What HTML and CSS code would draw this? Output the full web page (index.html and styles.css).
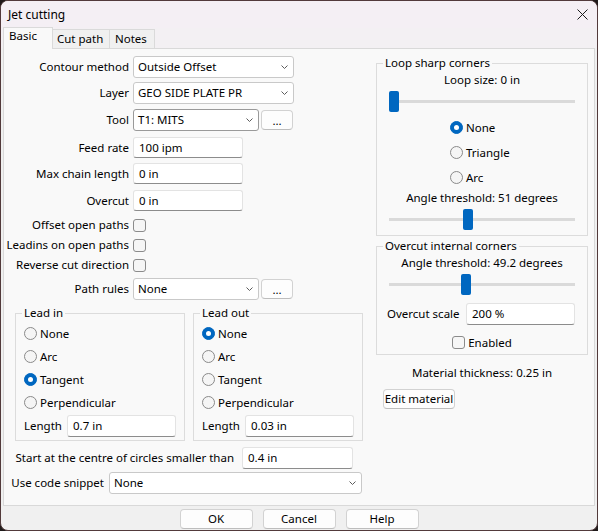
FILE: index.html
```html
<!DOCTYPE html>
<html>
<head>
<meta charset="utf-8">
<title>Jet cutting</title>
<link rel="stylesheet" href="styles.css">
</head>
<body>
<div class="window">
  <div class="titlebar">
    <span class="title">Jet cutting</span>
    <svg class="close" width="11" height="11" viewBox="0 0 11 11"><path d="M0.5 0.5 L10.5 10.5 M10.5 0.5 L0.5 10.5" stroke="#1b1b1b" stroke-width="1" fill="none"/></svg>
  </div>
  <div class="tabstrip">
    <div class="tab active">Basic</div>
    <div class="tab t-cut">Cut path</div>
    <div class="tab t-notes">Notes</div>
  </div>
  <div class="page">
    <div class="left">
      <div class="row r-first">
        <span class="lbl">Contour method</span>
        <div class="combo w-full"><span class="val">Outside Offset</span><svg width="7" height="4" viewBox="0 0 7 4"><polyline points="0.5,0.5 3.5,3.5 6.5,0.5" fill="none" stroke="#5c5c5c" stroke-width="1"/></svg></div>
      </div>
      <div class="row r-g4">
        <span class="lbl">Layer</span>
        <div class="combo w-full"><span class="val">GEO SIDE PLATE PR</span><svg width="7" height="4" viewBox="0 0 7 4"><polyline points="0.5,0.5 3.5,3.5 6.5,0.5" fill="none" stroke="#5c5c5c" stroke-width="1"/></svg></div>
      </div>
      <div class="row r-g5">
        <span class="lbl">Tool</span>
        <div class="combo w-short focus"><span class="val">T1: MITS</span><svg width="7" height="4" viewBox="0 0 7 4"><polyline points="0.5,0.5 3.5,3.5 6.5,0.5" fill="none" stroke="#5c5c5c" stroke-width="1"/></svg></div>
        <div class="btn dots">...</div>
      </div>
      <div class="row r-g6 r-edit">
        <span class="lbl">Feed rate</span>
        <div class="edit w-edit">100 ipm</div>
      </div>
      <div class="row r-g5 r-edit">
        <span class="lbl">Max chain length</span>
        <div class="edit w-edit">0 in</div>
      </div>
      <div class="row r-g6 r-edit">
        <span class="lbl">Overcut</span>
        <div class="edit w-edit">0 in</div>
      </div>
      <div class="row r-cb r-cbfirst">
        <span class="lbl">Offset open paths</span>
        <div class="check"></div>
      </div>
      <div class="row r-cb">
        <span class="lbl">Leadins on open paths</span>
        <div class="check"></div>
      </div>
      <div class="row r-cb">
        <span class="lbl">Reverse cut direction</span>
        <div class="check"></div>
      </div>
      <div class="row r-g3">
        <span class="lbl">Path rules</span>
        <div class="combo w-short"><span class="val">None</span><svg width="7" height="4" viewBox="0 0 7 4"><polyline points="0.5,0.5 3.5,3.5 6.5,0.5" fill="none" stroke="#5c5c5c" stroke-width="1"/></svg></div>
        <div class="btn dots">...</div>
      </div>

      <div class="leads">
        <fieldset class="group lead">
          <legend>Lead in</legend>
          <div class="opt opt-first"><span class="radio"></span>None</div>
          <div class="opt"><span class="radio"></span>Arc</div>
          <div class="opt"><span class="radio on"></span>Tangent</div>
          <div class="opt"><span class="radio"></span>Perpendicular</div>
          <div class="lenrow"><span>Length</span><div class="edit w-len">0.7 in</div></div>
        </fieldset>
        <fieldset class="group lead">
          <legend>Lead out</legend>
          <div class="opt opt-first"><span class="radio on"></span>None</div>
          <div class="opt"><span class="radio"></span>Arc</div>
          <div class="opt"><span class="radio"></span>Tangent</div>
          <div class="opt"><span class="radio"></span>Perpendicular</div>
          <div class="lenrow"><span>Length</span><div class="edit w-len">0.03 in</div></div>
        </fieldset>
      </div>

      <div class="row startrow">
        <span class="startlbl">Start at the centre of circles smaller than</span>
        <div class="edit w-start">0.4 in</div>
      </div>
      <div class="row snippetrow">
        <span class="sniplbl">Use code snippet</span>
        <div class="combo w-snip"><span class="val">None</span><svg width="7" height="4" viewBox="0 0 7 4"><polyline points="0.5,0.5 3.5,3.5 6.5,0.5" fill="none" stroke="#5c5c5c" stroke-width="1"/></svg></div>
      </div>
    </div>

    <div class="right">
      <fieldset class="group loop">
        <legend class="rlegend">Loop sharp corners</legend>
        <div class="center line-first">Loop size: 0 in</div>
        <div class="slider"><div class="thumb" style="margin-left:0px"></div></div>
        <div class="loopopts">
          <div class="lopt"><span class="radio on"></span>None</div>
          <div class="lopt"><span class="radio"></span>Triangle</div>
          <div class="lopt"><span class="radio"></span>Arc</div>
        </div>
        <div class="center">Angle threshold: 51 degrees</div>
        <div class="slider"><div class="thumb" style="margin-left:74px"></div></div>
      </fieldset>

      <fieldset class="group overcut">
        <legend class="rlegend">Overcut internal corners</legend>
        <div class="center line-second">Angle threshold: 49.2 degrees</div>
        <div class="slider"><div class="thumb" style="margin-left:72px"></div></div>
        <div class="scalerow"><span>Overcut scale</span><div class="edit w-scale">200 %</div></div>
        <div class="enrow"><span class="check"></span><span>Enabled</span></div>
      </fieldset>

      <div class="material">Material thickness: 0.25 in</div>
      <div class="btn editmat">Edit material</div>
    </div>
  </div>
  <div class="footer">
    <div class="btn fbtn">OK</div>
    <div class="btn fbtn">Cancel</div>
    <div class="btn fbtn">Help</div>
  </div>
</div>
</body>
</html>
```

FILE: styles.css
```css
* { box-sizing: border-box; }
html, body { margin: 0; padding: 0; }
body {
  width: 598px;
  height: 531px;
  overflow: hidden;
  background: #1f1a1a;
  font-family: "Noto Sans", "Open Sans", sans-serif;
  font-size: 11.5px;
  line-height: 16px;
  color: #000;
}
.window {
  width: 598px;
  height: 531px;
  border: 1px solid #523a3b;
  border-radius: 8px;
  overflow: hidden;
  background: #f0f0f0;
  display: flex;
  flex-direction: column;
}
.titlebar {
  flex: none;
  height: 27px;
  display: flex;
  align-items: center;
  justify-content: space-between;
  padding: 0 9px 0 7px;
  background: #f4eff4;
}
.title { font-size: 12px; }
.close { display: block; }

.tabstrip {
  flex: none;
  height: 20px;
  display: flex;
  align-items: flex-end;
  padding-left: 2px;
  background: #f3f0f3;
  position: relative;
  z-index: 1;
}
.tab {
  height: 19px;
  border: 1px solid #dadada;
  border-bottom: none;
  background: #f0f0f0;
  padding-top: 1px;
  white-space: nowrap;
}
.tab.active {
  height: 22px;
  width: 50px;
  margin-bottom: -1px;
  background: #f9f9f9;
  padding-left: 5px;
  padding-top: 0;
}
.t-cut { width: 57px; border-left: none; padding-left: 4px; }
.t-notes { width: 45px; border-left: none; padding-left: 5px; }

.page {
  flex: none;
  height: 458px;
  margin: 0 2px;
  border: 1px solid #d9d9d9;
  background: #f9f9f9;
  display: flex;
  align-items: flex-start;
}
.left {
  flex: none;
  width: 370px;
  display: flex;
  flex-direction: column;
}
.right {
  flex: none;
  width: 212px;
  margin-left: 2px;
  display: flex;
  flex-direction: column;
}

.row { display: flex; align-items: center; flex: none; height: 22px; }
.r-first { margin-top: 7px; }
.r-g3 { margin-top: 3px; }
.r-g4 { margin-top: 4px; }
.r-g5 { margin-top: 5px; }
.r-g6 { margin-top: 6px; }
.r-edit { height: 21px; }
.r-cb { height: 20px; }
.r-cbfirst { margin-top: 4px; }
.lbl { width: 125px; text-align: right; margin-right: 4px; white-space: nowrap; }

.combo {
  height: 22px;
  background: #fff;
  border: 1px solid #c9c9c9;
  border-radius: 3px;
  display: flex;
  align-items: center;
  padding-left: 4px;
  white-space: nowrap;
}
.combo.focus { border-color: #9a9a9a; }
.combo .val { flex: 1; }
.combo svg { margin-right: 5px; flex: none; }
.w-full { width: 161px; }
.w-short { width: 126px; }
.w-snip { width: 253px; }

.edit {
  height: 21px;
  background: #fff;
  border: 1px solid #e3e3e3;
  border-bottom-color: #8c8c8c;
  border-radius: 3px;
  padding-left: 5px;
  display: flex;
  align-items: center;
  white-space: nowrap;
}
.w-edit { width: 110px; }
.w-len { width: 109px; height: 22px; margin-left: auto; }
.w-start { width: 111px; height: 22px; }
.w-scale { width: 109px; height: 22px; margin-left: auto; }

.check {
  display: block;
  flex: none;
  width: 13px;
  height: 13px;
  border: 1px solid #8b8b8b;
  border-radius: 3px;
  background: #f6f6f6;
}
.radio {
  flex: none;
  width: 13px;
  height: 13px;
  border: 1px solid #8a8a8a;
  border-radius: 50%;
  background: #f5f5f5;
  margin-right: 3px;
}
.radio.on {
  background: #0067c0;
  border-color: #0067c0;
  display: flex;
  align-items: center;
  justify-content: center;
}
.radio.on::after {
  content: "";
  width: 5px;
  height: 5px;
  border-radius: 50%;
  background: #fff;
}

.btn {
  height: 20px;
  background: #fdfdfd;
  border: 1px solid #d2d2d2;
  border-bottom-color: #bdbdbd;
  border-radius: 4px;
  display: flex;
  align-items: center;
  justify-content: center;
  white-space: nowrap;
}
.dots { width: 32px; margin-left: 2px; padding-top: 2px; }

.leads { display: flex; gap: 8px; margin-left: 11px; margin-top: 5px; }
fieldset.group {
  margin: 0;
  border: 1px solid #dcdcdc;
  min-width: 0;
}
.group legend {
  padding: 0 2px;
  line-height: 16px;
}
fieldset.lead { width: 170px; height: 136px; padding: 0 8px 2px; }
.lead legend { margin-left: -2px; }
.opt { height: 23px; display: flex; align-items: center; }
.opt-first { margin-top: 1px; }
.lenrow { height: 22px; margin-top: 1px; display: flex; align-items: center; }

.startrow { margin-top: 6px; }
.startlbl { width: 230px; text-align: right; margin-right: 8px; white-space: nowrap; }
.snippetrow { margin-top: 3px; }
.sniplbl { width: 100px; text-align: right; margin-right: 5px; white-space: nowrap; }

fieldset.loop { margin-top: 6px; height: 181px; padding: 0 12px 5px; }
fieldset.overcut { margin-top: 2px; height: 117px; padding: 0 12px 1px; }
.group .rlegend { margin-left: -6px; }
.center { text-align: center; line-height: 16px; white-space: nowrap; }
.line-first { margin-top: 1px; }
.line-second { margin-top: 1px; }
.slider {
  margin-top: 3px;
  width: 186px;
  height: 21px;
  display: flex;
  background: linear-gradient(#dadada, #dadada) 0 9px / 100% 3px no-repeat;
}
.thumb { width: 10px; height: 21px; background: #0067c0; border-radius: 2px; }
.loopopts { margin-left: 61px; margin-top: 3px; }
.lopt { height: 25px; display: flex; align-items: center; }
.scalerow { margin-top: 8px; height: 22px; display: flex; align-items: center; margin-left: -2px; }
.enrow { margin-top: 8px; height: 19px; display: flex; align-items: center; justify-content: center; gap: 3px; }

.material { margin-top: 10px; text-align: center; }
.editmat { width: 72px; margin-top: 8px; margin-left: 7px; }

.footer { flex: 1; display: flex; justify-content: center; gap: 10px; padding-top: 3px; }
.fbtn { width: 73px; height: 20px; }
```
